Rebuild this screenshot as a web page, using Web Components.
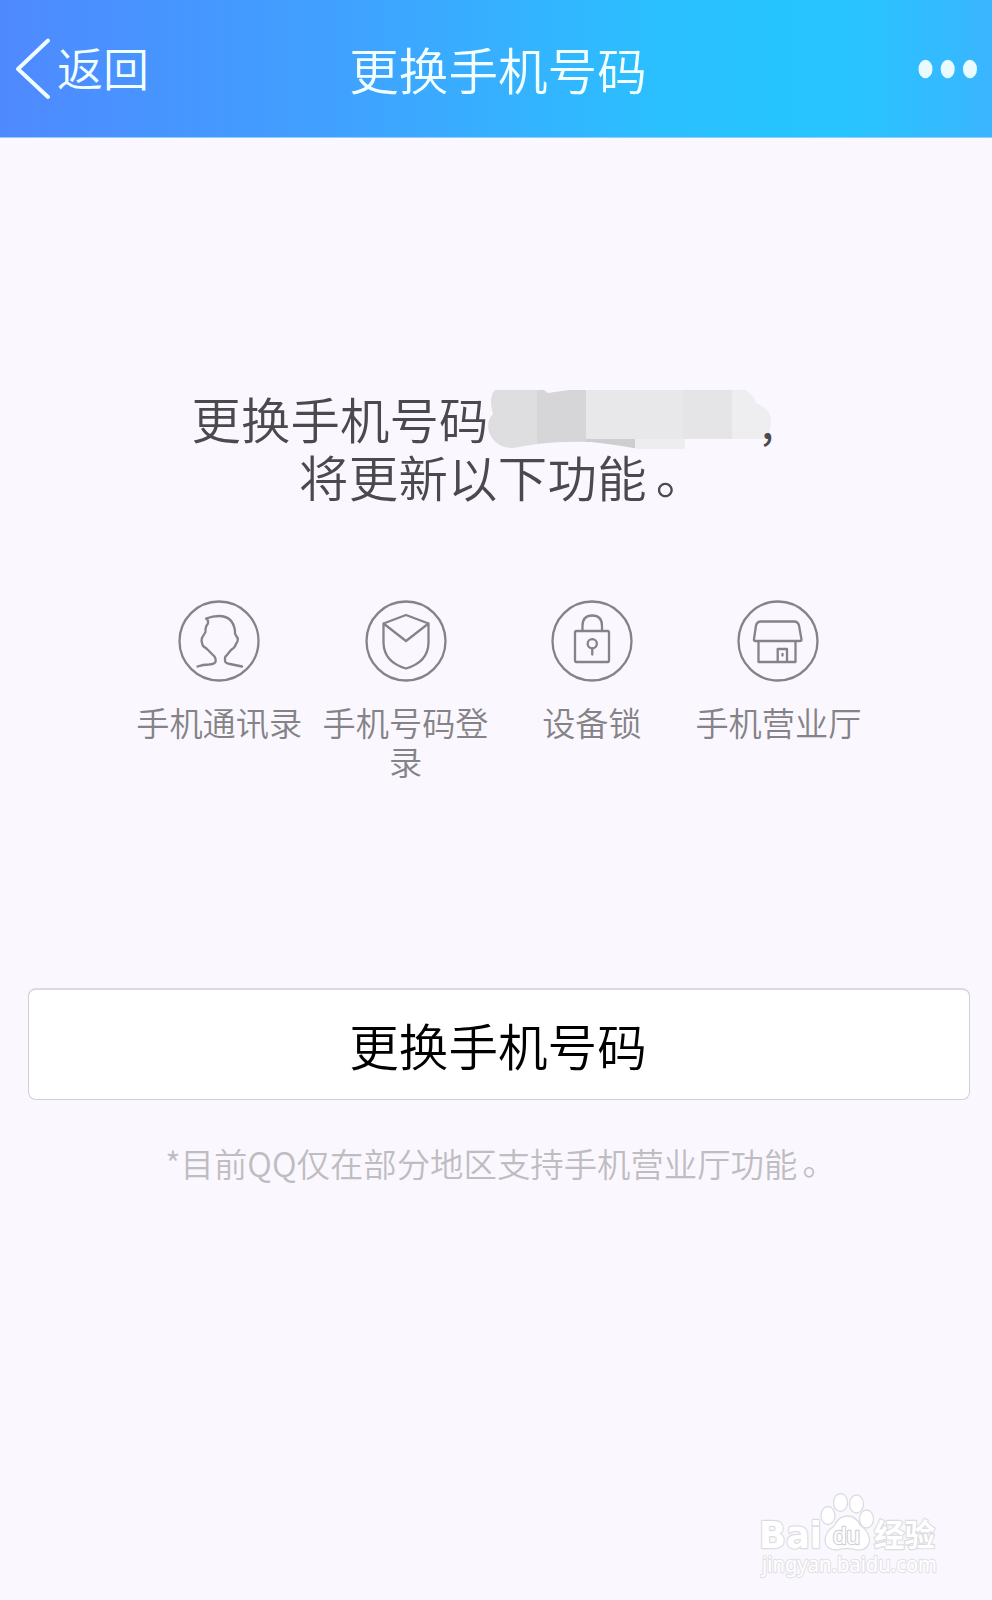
<!DOCTYPE html>
<html lang="zh-CN">
<head>
<meta charset="utf-8">
<title>更换手机号码</title>
<style>
html,body{margin:0;background:#faf8fe}
body{font-family:"Noto Sans CJK SC",sans-serif;font-weight:350;width:992px;height:1600px;overflow:hidden}
</style>
</head>
<body>
<phone-page></phone-page>
<script>
function define(name, html, setup) {
  const t = document.createElement('template');
  t.innerHTML = html;
  customElements.define(name, class extends HTMLElement {
    constructor() {
      super();
      this.attachShadow({mode: 'open'}).appendChild(t.content.cloneNode(true));
    }
    connectedCallback() { if (setup) setup(this, this.shadowRoot); }
  });
}

define('nav-bar', `
<style>
:host{display:grid;grid-template-columns:1fr auto 1fr;align-items:center;height:138px;box-sizing:border-box;
 background:linear-gradient(90deg,#5089ff 0,#4794ff 15%,#41a0ff 33%,#36b0ff 50%,#2bbfff 66%,#26c4ff 78%,#28c4ff 86%,#3ab5ff 100%);
 border-bottom:1px solid #8fcfff;color:#f2ffff}
.back{display:flex;align-items:center;padding-left:15px;font-size:46px;line-height:60px}
.back slot{display:block;margin-top:-5px}
.back svg{margin-right:6px}
.title{font-size:49.6px;line-height:60px;padding-left:4px;padding-bottom:1px}
.more{justify-self:end;margin-right:14px}
svg{display:block}
</style>
<div class="back"><svg width="36" height="62" viewBox="0 0 36 62" fill="none" stroke="#f2ffff" stroke-width="3.8" stroke-linecap="round" stroke-linejoin="round"><path d="M33 2.500 3 31 33 59"/></svg><slot name="back"></slot></div>
<div class="title"><slot></slot></div>
<svg class="more" width="60" height="20" viewBox="0 0 60 20" fill="#e9fbff"><ellipse cx="7.5" cy="10" rx="7" ry="9.3"/><ellipse cx="29.7" cy="10" rx="7" ry="9.3"/><ellipse cx="52" cy="10" rx="7" ry="9.3"/></svg>`);

define('masked-number', `
<style>:host{display:inline-block;width:286px;height:60px}svg{display:block}</style>
<svg width="286" height="60" viewBox="0 0 286 60">
<defs><clipPath id="c"><path d="M8 1H57L61 4 82 1H258Q267 5 269 14 283 19 284 31 284 42 280 50H198V60H152Q125 55 104 53 75 52 50 55L26 59Q8 59 2 43-1 32 6 25 1 9 8 1Z"/></clipPath></defs>
<g clip-path="url(#c)"><path fill="#dedde0" d="M0 0H51V60H0z"/><path fill="#d6d5d8" d="M50 0H100V60H50z"/><path fill="#e8e7ea" d="M99 0H198V50H99z"/><path fill="#cecdd0" d="M99 50H148V60H99z"/><path fill="#edecef" d="M148 50H198V60H148z"/><path fill="#e5e4e7" d="M196 0H246V50H196z"/><path fill="#eeedf0" d="M245 0H286V50H245z"/></g>
</svg>`);

define('page-heading', `
<style>:host{display:block;color:#4b494d;font-size:49.4px;line-height:58px;white-space:nowrap}
.a,.b{display:flex;height:58px}.a{padding-left:191.500px;letter-spacing:.1px}.b{padding-left:299px;letter-spacing:.3px}
masked-number{margin:0 0 0 -1px}
.comma{margin:4px 0 0 -12px;font-size:40px;font-weight:500;position:relative;z-index:1}
.stop{margin:-3px 0 0 9px}</style>
<div class="a"><span>更换手机号码</span><masked-number></masked-number><span class="comma">,</span></div>
<div class="b"><span>将更新以下功能</span><span class="stop">。</span></div>`);

const icons = {
  contact: '<path d="M64 66.500 52 64Q47 63 47 61V58Q47 56.500 48.500 55.500L53 50Q57 47.500 58 44Q61.500 39 58.500 36.500L57 33.500V31Q55 16 41 16Q35 16 28 18.500L30 20.500V23.500Q27 27 27.500 32L24.500 37Q22.500 40 25 46L29 49L36.500 56.500Q37.700 58 37.700 61Q37.700 64 31 64.500Q25 64.500 19.500 66.500"/>',
  shield: '<path d="M41 15 63.500 23.500V43Q63 62 41 68.500Q19 62 18.500 43V23.500ZM18.500 23.500 41 41 63.500 23.500"/>',
  lock: '<rect x="24" y="31" width="34" height="31" rx="1.500"/><path d="M31.500 31V26Q31.500 15.500 41.250 15.500T51 26V31M41.250 48.500V54.500"/><circle cx="41.250" cy="43.800" r="4.600"/>',
  shop: '<path d="M24 21.500H57Q61 21.500 62 25.500L64.500 39.500Q64.500 41 63 41H18.500Q16.500 41 17 39L19 25.500Q20 21.500 24 21.500ZM21.500 41V62H58.500V41M40.700 62V49H50V62M45.500 54V55.500"/>'
};
define('feature-item', `
<style>:host{display:flex;flex-direction:column;align-items:center;width:168px;color:#858387;font-size:33.2px;line-height:39px;text-align:center}
svg{display:block;margin-bottom:20px;fill:none;stroke:#858387;stroke-width:2.300;stroke-linejoin:round;stroke-linecap:round}
svg .ring{stroke-width:2.300}</style>
<svg width="82" height="82" viewBox="0 0 82 82"><circle class="ring" cx="41" cy="41" r="39.500"/><g></g></svg><slot></slot>`,
(el, root) => { root.querySelector('g').innerHTML = icons[el.getAttribute('icon')]; });

define('feature-row', `<style>:host{display:flex;column-gap:18.400px;padding-left:135.200px}</style><slot></slot>`);

define('primary-button', `
<style>:host{display:block}
button{display:block;width:100%;height:112px;margin:0;padding:0 2px 2px 0;box-sizing:border-box;border:1px solid #cfcfd5;border-top:2px solid #dbdae1;border-radius:8px;background:#fff;color:#000;font:inherit;font-size:49.6px;line-height:60px}</style>
<button><slot></slot></button>`);

define('foot-note', `<style>:host{display:flex;justify-content:center;color:#bfbdc1;font-size:33.4px;line-height:40px;white-space:nowrap}.stop{margin:-2px -6px 0 5px}</style><slot></slot><span class="stop">。</span>`);

define('site-mark', `
<style>:host{display:block;width:186px;height:90px}svg{display:block;overflow:visible}text{paint-order:stroke;stroke-linejoin:round}</style>
<svg width="186" height="90" viewBox="756 1490 186 90" fill="#fff" stroke="#dddce1" stroke-width="1.300">
<ellipse cx="828" cy="1515.500" rx="7" ry="9"/><ellipse cx="840.500" cy="1502.500" rx="7" ry="9"/><ellipse cx="856.500" cy="1504" rx="7" ry="9"/><ellipse cx="866.500" cy="1519" rx="7" ry="9"/>
<path d="M847 1516Q856 1516 860 1525Q870 1532 869.500 1542Q867 1551 857 1550Q847 1547 837 1550Q826 1550 825 1541Q825 1532 834 1526Q839 1516 847 1516Z"/>
<g stroke-width="2.400">
<text x="759" y="1548" font-family="DejaVu Sans" font-weight="700" font-size="37.500" textLength="63" lengthAdjust="spacingAndGlyphs">Bai</text>
<text x="833" y="1544" font-family="Liberation Sans" font-size="24" stroke="#d2d1d6" textLength="27" lengthAdjust="spacingAndGlyphs">du</text>
<text x="874" y="1546" font-family="Noto Sans CJK SC" font-weight="700" font-size="31" textLength="61" lengthAdjust="spacingAndGlyphs">经验</text>
<text x="762" y="1571.500" font-family="Noto Sans" font-weight="400" font-size="21.500" stroke="#e4e3e8" textLength="175" lengthAdjust="spacingAndGlyphs">jingyan.baidu.com</text>
</g></svg>`);

define('phone-page', `
<style>:host{display:flex;flex-direction:column;width:992px;height:1600px;background:#faf8fe}
page-heading{margin-top:251px}feature-row{margin-top:95px}
primary-button{margin:207px 22px 0 28px}foot-note{margin-top:43px;padding-left:3px}
site-mark{margin:auto 50px 20px auto}
feature-row{height:181px}</style>
<nav-bar><span slot="back">返回</span>更换手机号码</nav-bar>
<page-heading></page-heading>
<feature-row><feature-item icon="contact">手机通讯录</feature-item><feature-item icon="shield">手机号码登录</feature-item><feature-item icon="lock">设备锁</feature-item><feature-item icon="shop">手机营业厅</feature-item></feature-row>
<primary-button>更换手机号码</primary-button>
<foot-note>*目前QQ仅在部分地区支持手机营业厅功能</foot-note>
<site-mark></site-mark>`);
</script>
</body>
</html>
